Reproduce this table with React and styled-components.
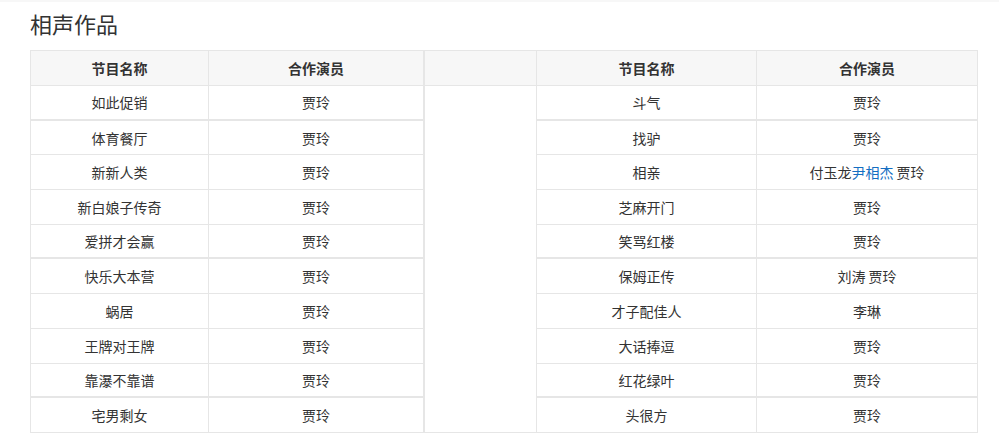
import React from 'react';
import styled, { createGlobalStyle } from 'styled-components';

const left = [
  '如此促销', '体育餐厅', '新新人类', '新白娘子传奇', '爱拼才会赢',
  '快乐大本营', '蜗居', '王牌对王牌', '靠瀑不靠谱', '宅男剩女',
];

const right = [
  { name: '斗气', cast: ['贾玲'] },
  { name: '找驴', cast: ['贾玲'] },
  { name: '相亲', cast: ['付玉龙', { link: '尹相杰' }, ' 贾玲'] },
  { name: '芝麻开门', cast: ['贾玲'] },
  { name: '笑骂红楼', cast: ['贾玲'] },
  { name: '保姆正传', cast: ['刘涛 贾玲'] },
  { name: '才子配佳人', cast: ['李琳'] },
  { name: '大话捧逗', cast: ['贾玲'] },
  { name: '红花绿叶', cast: ['贾玲'] },
  { name: '头很方', cast: ['贾玲'] },
];

// rows followed by the heavier divider
const thick = [0, 4, 8];

const App = () => {
  return (
    <>
      <GlobalStyle />
      <TopStrip />
      <Page>
        <Title>相声作品</Title>
        <Grid>
          <Cell $head>节目名称</Cell>
          <Cell $head $double>合作演员</Cell>
          <Cell $head />
          <Cell $head>节目名称</Cell>
          <Cell $head>合作演员</Cell>
          <Spacer />
          {left.map((name, i) => (
            <React.Fragment key={name}>
              <Cell $row={i + 2} $col={1} $thick={thick.includes(i)}>{name}</Cell>
              <Cell $row={i + 2} $col={2} $thick={thick.includes(i)} $double>贾玲</Cell>
              <Cell $row={i + 2} $col={4} $thick={thick.includes(i)}>{right[i].name}</Cell>
              <Cell $row={i + 2} $col={5} $thick={thick.includes(i)}>
                <span>
                  {right[i].cast.map((c, j) =>
                    typeof c === 'string' ? c : <Link key={j}>{c.link}</Link>
                  )}
                </span>
              </Cell>
            </React.Fragment>
          ))}
        </Grid>
      </Page>
    </>
  );
};

export default App;

const GlobalStyle = createGlobalStyle`
  body {
    margin: 0;
    background: #fff;
    font-family: "Noto Sans CJK SC", "Liberation Sans", sans-serif;
    color: #333;
  }
`;

const TopStrip = styled.div`
  height: 2px;
  background: #f7f7f7;
`;

const Page = styled.div`
  padding: 6px 22px 0 30px;
`;

const Title = styled.h2`
  margin: 0 0 12px;
  font-size: 22px;
  font-weight: 400;
  line-height: 30px;
  color: #333;
`;

const Grid = styled.div`
  display: grid;
  width: 948px;
  box-sizing: border-box;
  grid-template-columns: 178px 216px 112px 220px 221px;
  grid-template-rows: 35px repeat(10, 34.7px);
  border-top: 1px solid #e6e6e6;
  border-left: 1px solid #e6e6e6;
  font-size: 14px;
`;

const Cell = styled.div`
  ${(p) => (p.$row ? `grid-row: ${p.$row}; grid-column: ${p.$col};` : '')}
  display: flex;
  align-items: center;
  justify-content: center;
  box-sizing: border-box;
  background: ${(p) => (p.$head ? '#f7f7f7' : '#fff')};
  font-weight: ${(p) => (p.$head ? 700 : 400)};
  border-right: 1px solid #e6e6e6;
  border-bottom: ${(p) => (p.$thick ? 2 : 1)}px solid #e6e6e6;
  ${(p) => (p.$double ? 'border-right-width: 2px;' : '')}
  white-space: pre;
`;

const Spacer = styled.div`
  grid-column: 3;
  grid-row: 2 / span 10;
  border-right: 1px solid #e6e6e6;
  border-bottom: 1px solid #e6e6e6;
  background: #fff;
`;

const Link = styled.span`
  color: #136ec2;
`;
